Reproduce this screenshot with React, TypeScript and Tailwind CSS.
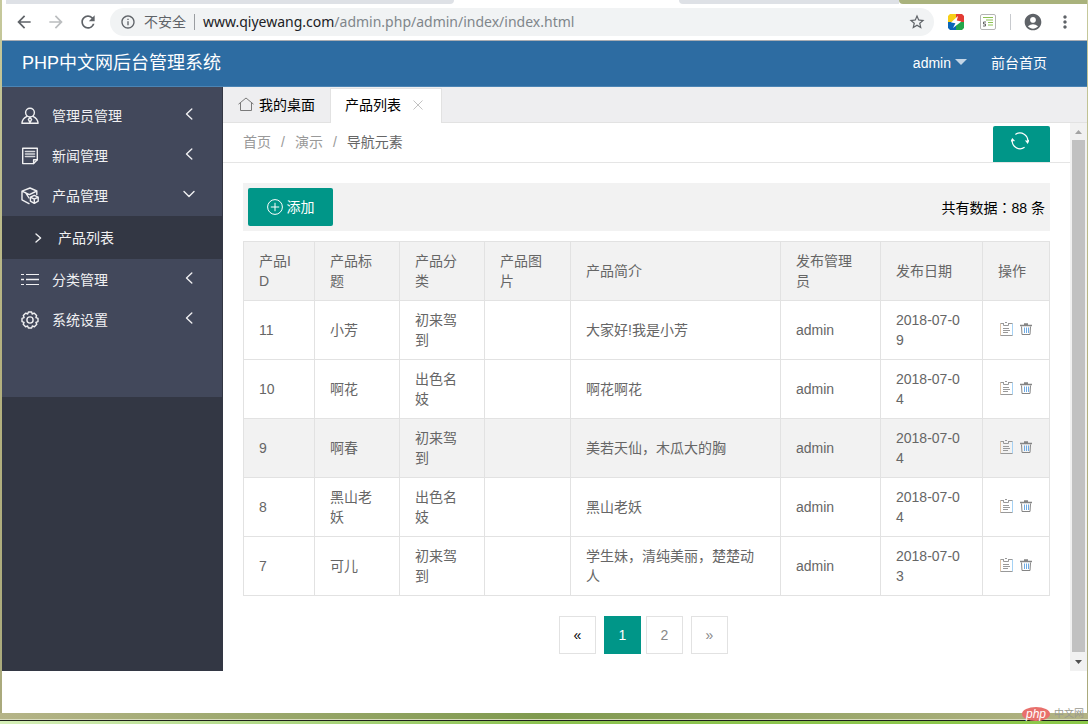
import type { ReactNode } from 'react'
import {
  MdAccountCircle,
  MdArrowBack,
  MdArrowForward,
  MdInfoOutline,
  MdMoreVert,
  MdRefresh,
  MdStarBorder,
} from 'react-icons/md'

const line = { fill: 'none', stroke: 'currentColor', strokeWidth: 1.4, strokeLinecap: 'round', strokeLinejoin: 'round' } as const

const UserIcon = () => (
  <svg width="18" height="18" viewBox="0 0 18 18" {...line}>
    <circle cx="9" cy="5.6" r="4.4" />
    <path d="M6 9.4C3.4 10.6 1.2 13 .9 16.3H17.1C16.8 13 14.6 10.6 12 9.4" />
    <path d="M9 10.4L7.4 12.4L9 15.6L10.6 12.4Z" />
  </svg>
)

const NewsIcon = () => (
  <svg width="18" height="18" viewBox="0 0 18 18" {...line}>
    <path d="M1.7 1.2H16.3V12.8L12.6 16.6H1.7Z" />
    <path d="M12.6 16.6V12.8H16.3" />
    <path d="M4.5 4.5H13.5M4.5 7H13.5M4.5 9.5H13.5" stroke="#d4d5da" strokeWidth="1.6" />
  </svg>
)

const BoxIcon = () => (
  <svg width="18" height="18" viewBox="0 0 18 18" {...line}>
    <path d="M15.8 7.4V4L9 1L1 4.2V12.8L8 16.6M1 4.2L8.4 7.6L15.8 4M4.6 5.6L8 11" />
    <path d="M13.3 8.4L17.2 10.2V14.2L13.3 16.4L9.4 14.2V10.2ZM9.4 10.2L13.3 12.2L17.2 10.2M13.3 12.2V16.4" />
  </svg>
)

const ListIcon = () => (
  <svg width="18" height="18" viewBox="0 0 18 18" fill="none" stroke="currentColor">
    <path d="M0 3.5H3M5 3.5H18M0 13.5H3M5 13.5H18" />
    <path d="M0 8.5H3M5 8.5H18" strokeWidth="1.6" />
  </svg>
)

const GearIcon = () => (
  <svg width="18" height="18" viewBox="0 0 18 18" {...line}>
    <path d="M7.4 1H10.6L11.2 3L13.1 2.1L15.6 4.6L14.9 6.6L17 7.4V10.6L14.9 11.4L15.8 13.3L13.4 15.8L11.4 14.9L10.6 17H7.4L6.6 14.9L4.6 15.8L2.2 13.3L3.1 11.4L1 10.6V7.4L3.1 6.6L2.3 4.6L4.8 2.1L6.7 3Z" />
    <circle cx="9" cy="9" r="3.1" />
  </svg>
)

const HomeIcon = () => (
  <svg width="16" height="16" viewBox="0 0 16 16" fill="none" stroke="#7a7a7a" strokeLinejoin="round">
    <path d="M.5 7.2L8 1L15.5 7.2M2.5 6V13.5H13.5V6" />
  </svg>
)

const RefreshIcon = () => (
  <svg width="18" height="18" viewBox="0 0 18 18" fill="none" stroke="#fff" strokeWidth="1.2">
    <path d="M4.4 2.4A7.8 7.8 0 0 1 16.6 10.2M13.6 15.3A7.8 7.8 0 0 1 1.4 7.6" />
    <path d="M14.6 8.4L16.6 10.8L17.8 8M.2 9.6L1.4 7L3.4 9.2" />
  </svg>
)

const PlusIcon = () => (
  <svg width="16" height="16" viewBox="0 0 16 16" fill="none" stroke="#fff">
    <circle cx="8" cy="8" r="7.4" />
    <path d="M8 3.8V12.2M3.8 8H12.2" />
  </svg>
)

const EditIcon = () => (
  <svg width="16" height="16" viewBox="0 0 16 16" fill="none" stroke="#999">
    <path d="M2.5 1.5V13.5" stroke="#dcc3a8" />
    <path d="M14.5 1.5V13.5" stroke="#a5d2f5" />
    <path d="M2.5 1.5H5.5M10.5 1.5H14.5M2.5 13.5H14.5M5.5 1V3.5H10.5V1M7 .5H9M5 6.5H11M5 8.5H12M5 10.5H10" />
  </svg>
)

const TrashIcon = () => (
  <svg width="16" height="16" viewBox="0 0 16 16" fill="none" stroke="#858585">
    <path d="M2 3.5H14M6 2H10" strokeWidth="1.5" />
    <path d="M3.5 4.5L4 12.5H12L12.5 4.5" />
    <path d="M6.5 5.5V11M8.5 5.5V11M10.5 5.5V11" stroke="#6fabe4" />
  </svg>
)

const Chevron = ({ d }: { d: string }) => (
  <svg width="12" height="12" viewBox="0 0 12 12" {...line}>
    <path d={d} />
  </svg>
)

const LEFT = 'M8.8 1L3.5 6L8.8 11'
const RIGHT = 'M4 2L8.6 6L4 10'
const DOWN = 'M1 3.5L6 8.5L11 3.5'

const menu: { icon: ReactNode; title: string; children?: string[] }[] = [
  { icon: <UserIcon />, title: '管理员管理' },
  { icon: <NewsIcon />, title: '新闻管理' },
  { icon: <BoxIcon />, title: '产品管理', children: ['产品列表'] },
  { icon: <ListIcon />, title: '分类管理' },
  { icon: <GearIcon />, title: '系统设置' },
]

const columns = [
  { title: '产品ID', width: 'w-[71px]' },
  { title: '产品标题', width: 'w-[85px]' },
  { title: '产品分类', width: 'w-[85px]' },
  { title: '产品图片', width: 'w-[86px]' },
  { title: '产品简介', width: '' },
  { title: '发布管理员', width: 'w-[100px]' },
  { title: '发布日期', width: 'w-[102px]' },
  { title: '操作', width: 'w-[67px]' },
]

const products = [
  { id: 11, title: '小芳', category: '初来驾到', intro: '大家好!我是小芳', date: '2018-07-09' },
  { id: 10, title: '啊花', category: '出色名妓', intro: '啊花啊花', date: '2018-07-04' },
  { id: 9, title: '啊春', category: '初来驾到', intro: '美若天仙，木瓜大的胸', date: '2018-07-04', active: true },
  { id: 8, title: '黑山老妖', category: '出色名妓', intro: '黑山老妖', date: '2018-07-04' },
  { id: 7, title: '可儿', category: '初来驾到', intro: '学生妹，清纯美丽，楚楚动人', date: '2018-07-03' },
]

function BrowserBar() {
  return (
    <div>
      <div className="flex h-1">
        <div className="ml-1 w-[448px] rounded-br-lg bg-[#dee1e6]" />
        <div className="w-[225px] bg-white" />
        <div className="flex-1 rounded-bl-lg bg-[#dee1e6]" />
        <div className="w-[188px] rounded-bl-lg bg-[#a9b27c]" />
      </div>
      <div className="flex h-9 items-center bg-white pl-3 text-[#5f6368]">
        <button aria-label="后退" className="mr-3"><MdArrowBack size={20} /></button>
        <button aria-label="前进" className="mr-3 text-[#bbbdbf]"><MdArrowForward size={20} /></button>
        <button aria-label="刷新" className="mr-3"><MdRefresh size={20} /></button>
        <div className="flex h-7 flex-1 items-center rounded-full bg-[#f1f3f4] pr-2 pl-2.5">
          <MdInfoOutline size={16} />
          <span className="ml-2 text-sm">不安全</span>
          <span className="mx-2 h-4 w-px bg-[#9a9da1]" />
          <div role="textbox" aria-label="地址栏" className="flex-1 font-['Noto_Sans'] text-sm whitespace-nowrap text-[#80868b]">
            <span className="text-[#202124]">www.qiyewang.com</span>/admin.php/admin/index/index.html
          </div>
          <button aria-label="收藏"><MdStarBorder size={18} /></button>
        </div>
        <svg className="ml-3.5" width="16" height="16" viewBox="0 0 16 16">
          <path d="M2 0H8V8H0V2Z" fill="#f7cf17" />
          <path d="M8 0H14L16 2V8H8Z" fill="#e33b34" />
          <path d="M0 8H8V16H2L0 14Z" fill="#0b66b8" />
          <path d="M8 8H16V14L14 16H8Z" fill="#22a64b" />
          <path d="M10 2L3 8.6L7.4 9.2L5 14L13.4 7.4L8.8 6.6Z" fill="#fff" />
        </svg>
        <svg className="ml-4" width="16" height="16" viewBox="0 0 16 16" fill="none">
          <rect x=".5" y=".5" width="15" height="15" rx="1.5" stroke="#b5b5b5" />
          <path d="M3 3.5H13M6 6H13M8 8.5H13M8 11H13" stroke="#8cc152" />
          <path d="M6 8H3.5V10H5.5V12H3" stroke="#666" />
        </svg>
        <span className="mr-3 ml-3.5 h-4 w-px bg-[#c8cace]" />
        <button aria-label="用户"><MdAccountCircle size={20} /></button>
        <button aria-label="菜单" className="mx-3"><MdMoreVert size={20} /></button>
      </div>
    </div>
  )
}

function Header() {
  return (
    <header className="flex h-[47px] items-center border-t border-b border-t-[#a9adb3] border-b-[#4b84b4] bg-[#2d6ca2] px-5 pr-10 pb-0.5 text-white">
      <h1 className="flex-1 text-lg">PHP中文网后台管理系统</h1>
      <button className="flex items-center gap-1">
        admin
        <svg width="12" height="10" viewBox="0 0 12 10"><path d="M0 1H12L6 7Z" fill="#c3d5e6" /></svg>
      </button>
      <a href="#" className="ml-6">前台首页</a>
    </header>
  )
}

function Sidebar() {
  return (
    <nav className="w-[221px] shrink-0 border-r border-[#333744] bg-[#333744] text-[#f0f0f2]">
      <ul className="bg-[#42485b] pt-[9px] pb-[57px]">
        {menu.map((m) => (
          <li key={m.title}>
            <a href="#" className="flex h-10 items-center pr-[27px] pl-[19px]">
              {m.icon}
              <span className="ml-[13px] flex-1">{m.title}</span>
              <span className="pb-1"><Chevron d={m.children ? DOWN : LEFT} /></span>
            </a>
            {m.children?.map((c) => (
              <a key={c} href="#" className="mb-px flex h-[43px] items-center gap-3.5 bg-[#333744] pl-[30px]">
                <Chevron d={RIGHT} />
                {c}
              </a>
            ))}
          </li>
        ))}
      </ul>
    </nav>
  )
}

function TabBar() {
  return (
    <div className="flex h-9 border-b border-[#e2e2e2] bg-[#eeeef0] pt-px text-black">
      <button className="flex w-[108px] items-center gap-[5px] border-r border-[#e2e2e2] pl-[15px]">
        <HomeIcon />
        我的桌面
      </button>
      <div className="-mb-px flex w-[111px] items-center justify-between border-t border-r border-[#e2e2e2] bg-white pr-[17px] pb-0.5 pl-3.5">
        <button>产品列表</button>
        <button aria-label="关闭">
          <svg width="12" height="12" viewBox="0 0 12 12" stroke="#c2c2c2"><path d="M1.5 1.5L10.5 10.5M10.5 1.5L1.5 10.5" /></svg>
        </button>
      </div>
    </div>
  )
}

function Breadcrumb() {
  return (
    <div className="flex h-10 items-end justify-between border-b border-[#e5e5e5] px-5 text-[#999]">
      <div className="flex gap-2.5 self-center pb-0.5">
        <a href="#">首页</a>
        <span>/</span>
        <a href="#">演示</a>
        <span>/</span>
        <a href="#" className="text-[#666]">导航元素</a>
      </div>
      <button aria-label="刷新页面" className="flex h-9 w-[57px] rounded-t-xs bg-[#009688] pt-1.5 pl-[18px]">
        <RefreshIcon />
      </button>
    </div>
  )
}

function ProductTable() {
  return (
    <table className="mt-2.5 w-full table-fixed border-collapse text-left break-all text-[#666]">
      <thead>
        <tr className="bg-[#f2f2f2]">
          {columns.map((c) => (
            <th key={c.title} className={`${c.width} border border-[#e2e2e2] px-[15px] py-[9px] font-normal`}>{c.title}</th>
          ))}
        </tr>
      </thead>
      <tbody>
        {products.map((p) => (
          <tr key={p.id} className={p.active ? 'bg-[#f2f2f2]' : 'hover:bg-[#f2f2f2]'}>
            {[p.id, p.title, p.category, '', p.intro, 'admin', p.date].map((value, i) => (
              <td key={i} className="border border-[#e2e2e2] px-[15px] py-[9px]">{value}</td>
            ))}
            <td className="border border-[#e2e2e2] px-[15px] py-[9px]">
              <div className="flex gap-1">
                <button aria-label="编辑"><EditIcon /></button>
                <button aria-label="删除"><TrashIcon /></button>
              </div>
            </td>
          </tr>
        ))}
      </tbody>
    </table>
  )
}

function Pagination() {
  return (
    <div className="mt-5 flex justify-center gap-2 pr-1.5">
      <button className="h-[38px] w-[37px] border border-[#e2e2e2] text-black">«</button>
      <div className="flex gap-[5px]">
        <button className="h-[38px] w-[37px] bg-[#009688] text-white">1</button>
        <button className="h-[38px] w-[37px] border border-[#e2e2e2] text-[#888]">2</button>
      </div>
      <button className="h-[38px] w-[37px] border border-[#e2e2e2] text-[#888]">»</button>
    </div>
  )
}

function Scrollbar() {
  return (
    <div className="flex w-[17px] shrink-0 flex-col items-center bg-[#f1f1f1]">
      <svg width="17" height="17" viewBox="0 0 17 17"><path d="M5 11H12L8.5 7Z" fill="#a3a3a3" /></svg>
      <div className="w-[13px] flex-1 bg-[#c1c1c1]" />
      <svg className="mt-0.5" width="17" height="17" viewBox="0 0 17 17"><path d="M5 6H12L8.5 10Z" fill="#505050" /></svg>
    </div>
  )
}

export default function App() {
  return (
    <div className="relative flex min-h-screen flex-col bg-linear-to-b from-[#c6c99c] via-[#b4b17f] to-[#a9a97c] font-['Liberation_Sans','Noto_Sans_CJK_SC',sans-serif] text-sm leading-5">
      <div className="mr-px ml-0.5 flex flex-1 flex-col bg-white">
        <BrowserBar />
        <Header />
        <div className="flex flex-1">
          <Sidebar />
          <div className="flex min-w-0 flex-1 flex-col">
            <TabBar />
            <div className="flex flex-1">
              <main className="min-w-0 flex-1">
                <Breadcrumb />
                <div className="px-5 pt-5">
                  <div className="flex items-center justify-between bg-[#f2f2f2] p-[5px]">
                    <button className="flex h-[38px] w-[85px] items-center justify-center gap-1 rounded-xs bg-[#009688] text-white">
                      <PlusIcon />
                      添加
                    </button>
                    <span className="text-black">共有数据<span className="font-['Noto_Sans_CJK_TC',sans-serif]">：</span>88 条</span>
                  </div>
                  <ProductTable />
                  <Pagination />
                </div>
              </main>
              <Scrollbar />
            </div>
          </div>
        </div>
        <div className="h-[42px]" />
      </div>
      <div className="h-1.5 bg-linear-to-r from-[#b5b488] via-[#7f9a4e] to-[#b3b385]" />
      <div className="h-px bg-[#d9dcc0]" />
      <div className="h-1 border-t border-[#1d2118] bg-linear-to-r from-[#d5efb8] via-[#8cc250] to-[#8cc94a]" />
      <div className="absolute right-1 bottom-0.5 flex items-center gap-1 leading-4">
        <span className="flex h-3.5 w-7 items-center justify-center rounded-[50%] bg-[#e8706c] text-xs text-white italic">php</span>
        <span className="text-[10px] text-[#9a9a90]">中文网</span>
      </div>
    </div>
  )
}
